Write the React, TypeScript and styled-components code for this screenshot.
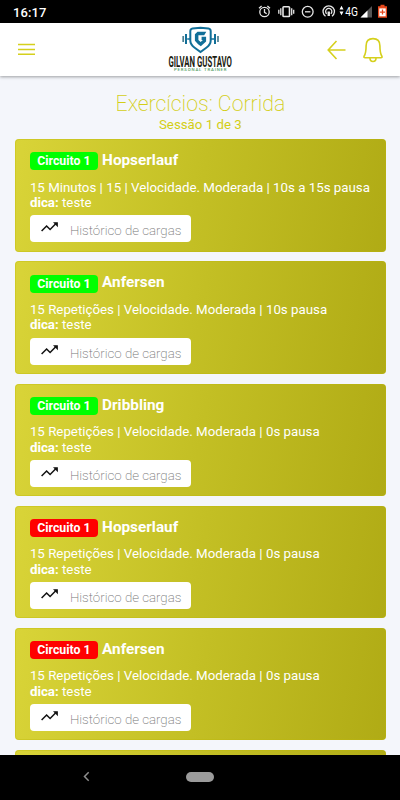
import React from "react";
import styled, { createGlobalStyle } from "styled-components";

const Global = createGlobalStyle`
  * { box-sizing: border-box; }
  html, body { margin: 0; padding: 0; background: #f4f6fb; }
  body { font-family: Roboto, "Liberation Sans", sans-serif; overflow: hidden; }
`;

const Screen = styled.div`
  width: 400px;
  height: 800px;
  display: flex;
  flex-direction: column;
  overflow: hidden;
  background: #f4f6fb;
`;

const StatusBar = styled.div`
  height: 23px;
  flex: none;
  background: #000;
  color: #fff;
  display: flex;
  justify-content: space-between;
  padding-left: 13px;
`;

const Clock = styled.span`
  font-size: 13px;
  font-weight: 500;
  line-height: 25px;
  letter-spacing: 0.1px;
`;

const StatusIcons = styled.svg`
  display: block;
  width: 150px;
  height: 23px;
`;

const Header = styled.header`
  height: 53px;
  flex: none;
  background: #fff;
  display: grid;
  grid-template-columns: 1fr 80px 1fr;
  box-shadow: 0 1px 3px rgba(0, 0, 0, 0.36);
  z-index: 1;
`;

const HeaderSide = styled.div<{ $end?: boolean }>`
  display: flex;
  align-items: center;
  justify-content: ${(p) => (p.$end ? "flex-end" : "flex-start")};
  gap: 17px;
  padding: ${(p) => (p.$end ? "0 17px 0 0" : "0 0 0 18px")};
`;

const IconButton = styled.button`
  border: 0;
  padding: 0;
  background: none;
  display: flex;
  color: #d5d01c;
`;

const Content = styled.main`
  flex: 1;
  min-height: 0;
  overflow: hidden;
  padding: 15px 13.7px 0 14.5px;
`;

const Title = styled.h1`
  margin: 0;
  font-size: 21.300px;
  font-weight: 200;
  line-height: 26px;
  text-align: center;
  color: #d3ce16;
`;

const Subtitle = styled.p`
  margin: 0 0 6.3px;
  font-size: 13.3px;
  font-weight: 400;
  line-height: 16px;
  text-align: center;
  color: #d3ce16;
`;

const List = styled.div`
  display: flex;
  flex-direction: column;
  gap: 9.9px;
`;

const Card = styled.article`
  height: 112.3px;
  flex: none;
  border-radius: 4px;
  padding: 12px 15.4px 0;
  color: #fff;
  background: linear-gradient(100deg, #d9d438 0%, #c3bf24 50%, #b0ab15 100%);
  box-shadow: inset 0 0 0 1px rgba(190, 182, 10, 0.35);
`;

const CardHead = styled.div`
  display: flex;
  align-items: flex-start;
  gap: 4.2px;
  height: 20px;
`;

const Badge = styled.span<{ $active: boolean }>`
  width: 68px;
  height: 18px;
  margin-top: 1.2px;
  border-radius: 4px;
  text-align: center;
  font-size: 12.3px;
  font-weight: 700;
  line-height: 18px;
  background: ${(p) => (p.$active ? "#00ff00" : "#ff0000")};
`;

const Name = styled.h2`
  margin: 0;
  font-size: 15.3px;
  font-weight: 700;
  line-height: 18px;
`;

const Details = styled.p`
  margin: 8.3px 0 0;
  font-size: 13.3px;
  line-height: 15.6px;
  white-space: nowrap;
`;

const HistoryButton = styled.button`
  margin-top: 4.7px;
  width: 161.5px;
  height: 27px;
  border: 0;
  border-radius: 4px;
  background: #fff;
  display: flex;
  gap: 12px;
  padding: 0 0 0 11px;
  font-family: inherit;
  font-size: 13.3px;
  font-weight: 200;
  line-height: 31px;
  white-space: nowrap;
  color: #777;
`;

const TrendIcon = styled.svg`
  flex: none;
  width: 17px;
  height: 12px;
  margin-top: 6px;
`;

const NavBar = styled.nav`
  height: 45.5px;
  flex: none;
  background: #000;
  display: flex;
  align-items: center;
  padding: 0 0 1px 82px;
  gap: 95px;
`;

const HomePill = styled.span`
  width: 28px;
  height: 10px;
  border-radius: 5px;
  background: #9b9b9b;
`;

const exercises = [
  { name: "Hopserlauf", active: true, details: "15 Minutos | 15 | Velocidade. Moderada | 10s a 15s pausa" },
  { name: "Anfersen", active: true, details: "15 Repetições | Velocidade. Moderada | 10s pausa" },
  { name: "Dribbling", active: true, details: "15 Repetições | Velocidade. Moderada | 0s pausa" },
  { name: "Hopserlauf", active: false, details: "15 Repetições | Velocidade. Moderada | 0s pausa" },
  { name: "Anfersen", active: false, details: "15 Repetições | Velocidade. Moderada | 0s pausa" },
];

function SystemIcons() {
  return (
    <StatusIcons viewBox="250 0 150 23" fill="none" stroke="#e6e6e6" strokeWidth="1.3">
      <circle cx="264.5" cy="12" r="4.7" />
      <path d="M264.5 9v3.3l2.2 1.4M259 8.2l2.6-2.2M270 8.2L267.400 6" />
      <rect x="283" y="6.800" width="6.500" height="9.700" rx="0.8" strokeWidth="1.600" />
      <path d="M280.800 8.200v7M291.700 8.200v7M278.800 9.800v4M293.700 9.800v4" />
      <circle cx="307.700" cy="11.800" r="5.400" />
      <path d="M305 11.800h5.400" />
      <path d="M325.500 16.200a5.700 5.700 0 1 1 6.500 0M326.700 13.800a3.100 3.100 0 1 1 4.100 0" />
      <path d="M328.750 11.500v4.500" strokeWidth="2.400" />
      <path d="M339.500 9.500l2-3.700 2 3.700zM339.500 11.500l2 3.700 2-3.700z" fill="#fff" stroke="none" />
      <text x="345.300" y="16" fontFamily="Roboto, sans-serif" fontSize="12" fill="#fff" stroke="none" textLength="12.700" lengthAdjust="spacingAndGlyphs">4G</text>
      <path d="M360.500 17.500L372 6v11.500z" fill="#555" stroke="none" />
      <path d="M360.500 17.500L367.500 10.500v7z" fill="#fff" stroke="none" />
      <path d="M378 6.200h2.500V4.700h4v1.500h2.500v11.500h-9z" fill="#e8481c" stroke="none" />
      <path d="M379.300 8.400h6.400v7.900h-6.400z" fill="#fff" stroke="none" />
      <path d="M382.500 9.600v5M380 12.100h5" stroke="#e8481c" />
    </StatusIcons>
  );
}

function Logo() {
  return (
    <svg width="80" height="53" viewBox="160 23 80 53" fill="none">
      <path d="M200.500 27.800l8 0.700c1.500 0.200 2.200 1.200 2.200 2.700v9.300c0 3.200-1.700 5.200-4.400 7.200l-5.800 4.300-5.800-4.300c-2.700-2-4.400-4-4.400-7.200v-9.300c0-1.500 0.700-2.500 2.200-2.700z" stroke="#126f98" strokeWidth="2" />
      <path d="M206.300 31.800h-8.800l-2.600 2.500v6.500l3.200 3.400 2.700 2 5.300-4.800v-4.600h-4.500v3.200h1.300l-2.300 2-2.200-2.100v-4.700h5.800z" fill="#126f98" />
      <path d="M187.200 39H190M211 39h3" stroke="#126f98" strokeWidth="1.500" />
      <path d="M186 34v10M215 34v10" stroke="#126f98" strokeWidth="2" />
      <path d="M183.200 36v6M218 36v6" stroke="#497f91" strokeWidth="1.700" />
      <text x="168.500" y="0" transform="translate(0 66.700) scale(1 1.450)" fontFamily="Roboto, sans-serif" fontSize="9.500" fontWeight="700" fill="#1d1d12" textLength="63.500" lengthAdjust="spacingAndGlyphs">GILVAN GUSTAVO</text>
      <text x="174" y="71.300" fontFamily="Roboto, sans-serif" fontSize="4.300" fontWeight="500" fill="#4f9b62" textLength="52.500">PERSONAL TRAINER</text>
    </svg>
  );
}

export default function App() {
  return (
    <Screen>
      <Global />
      <StatusBar>
        <Clock>16:17</Clock>
        <SystemIcons />
      </StatusBar>
      <Header>
        <HeaderSide>
          <IconButton aria-label="Menu">
            <svg width="17" height="13" viewBox="0 0 17 13" stroke="currentColor" strokeWidth="1.500">
              <path d="M0 1.500h17M0 6.500h17M0 11.300h17" />
            </svg>
          </IconButton>
        </HeaderSide>
        <Logo />
        <HeaderSide $end>
          <IconButton aria-label="Voltar">
            <svg width="19" height="20" viewBox="0 0 19 20" fill="none" stroke="currentColor" strokeWidth="1.600">
              <path d="M18.500 10H1.200M9.500 1L1.200 10l8.300 9" />
            </svg>
          </IconButton>
          <IconButton aria-label="Notificações">
            <svg width="20" height="26" viewBox="0 0 20 26" fill="none" stroke="currentColor" strokeWidth="1.600" strokeLinejoin="round">
              <path d="M10 1.600c-4.600 0-6.900 2.700-6.900 7.200 0 6.200-0.700 8.500-2 10.500-0.400 0.900 0 1.500 0.900 1.500h16c0.900 0 1.300-0.600 0.900-1.500-1.300-2-2-4.300-2-10.500 0-4.500-2.300-7.200-6.900-7.200z" />
              <path d="M7 21c0 2.200 1.200 3.500 3 3.500s3-1.300 3-3.500" />
            </svg>
          </IconButton>
        </HeaderSide>
      </Header>
      <Content>
        <Title>Exercícios: Corrida</Title>
        <Subtitle>Sessão 1 de 3</Subtitle>
        <List>
          {exercises.map((e, i) => (
            <Card key={i}>
              <CardHead>
                <Badge $active={e.active}>Circuito 1</Badge>
                <Name>{e.name}</Name>
              </CardHead>
              <Details>
                {e.details}
                <br />
                <b>dica:</b> teste
              </Details>
              <HistoryButton>
                <TrendIcon viewBox="0 0 17 12" fill="none" stroke="#111" strokeWidth="1.500">
                  <path d="M0.600 10l5-5 3.500 3.500L15.500 2" />
                  <path d="M12 1.300h4.900v4.900z" fill="#111" stroke="none" />
                </TrendIcon>
                Histórico de cargas
              </HistoryButton>
            </Card>
          ))}
          <Card />
        </List>
      </Content>
      <NavBar>
        <svg width="9" height="11" viewBox="0 0 9 11" fill="none" stroke="#8d8d8d" strokeWidth="1.500">
          <path d="M6.700 1.300L2.500 5.500l4.200 4.200" />
        </svg>
        <HomePill />
      </NavBar>
    </Screen>
  );
}
